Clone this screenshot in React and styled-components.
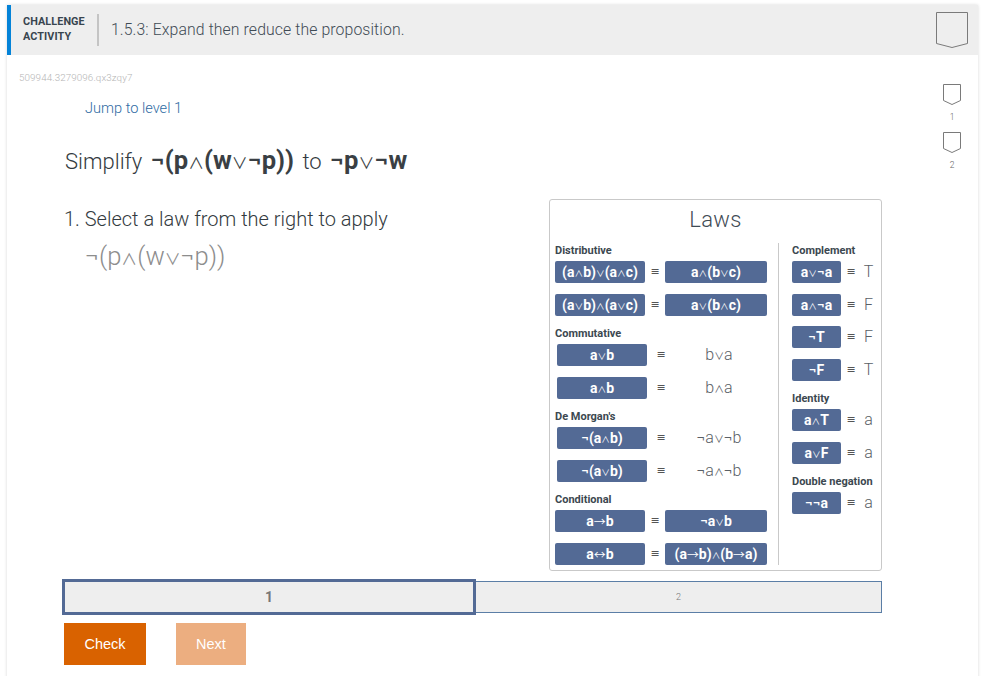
import React from "react";
import styled, { createGlobalStyle } from "styled-components";

const Global = createGlobalStyle`
  html, body { margin: 0; padding: 0; background: #fff; height: 100%; overflow: hidden; }
  body { font-family: Roboto, "Liberation Sans", "DejaVu Sans", sans-serif; color: #4a4f54; }
`;
const Card = styled.div`
  margin: 5px 7px 0 7px; width: 971px; height: 700px; background: #fff;
  box-shadow: 0 0 3px rgba(0,0,0,.16);
`;
const Header = styled.header`
  height: 50px; box-sizing: border-box; background: #eee; border-left: 4px solid #0483d8;
  display: flex; align-items: center; padding: 0 10px 0 12px;
`;
const Kind = styled.div`
  font: 700 10.8px/15px Roboto, sans-serif; color: #38454f; width: 63px; padding: 0 11px 3px 0;
  text-align: left;
`;
const KindLine = styled.span`display: block; letter-spacing: .1px;`;
const Title = styled.h1`
  flex: 1; margin: 0; font: 300 15.8px/32px Roboto, sans-serif; color: #3f4b55; letter-spacing: .1px;
  border-left: 2px solid #c4c4c4; padding-left: 12px;
`;
const ShieldSvg = styled.svg`display: block; fill: none; stroke: #7a7a7a; stroke-width: 1;`;
const Shield = ({ w, h }) => (
  <ShieldSvg width={w} height={h} viewBox={`0 0 ${w} ${h}`}>
    <path d={`M.5 .5H${w - .5}V${h - 4.5}L${w / 2} ${h - .5}L.5 ${h - 4.5}Z`} />
  </ShieldSvg>
);
const Body = styled.div`display: flex;`;
const Main = styled.main`flex: 1; padding-left: 12px; min-width: 0;`;
const Rail = styled.aside`
  width: 52px; padding-top: 29px; display: flex; flex-direction: column; align-items: center;
`;
const Level = styled.div`
  display: flex; flex-direction: column; align-items: center; height: 48px;
  font: 300 8.5px/12px Roboto, sans-serif; color: #666; gap: 6px;
`;
const Seed = styled.div`margin-top: 17px; font: 300 9.8px/12px Roboto, sans-serif; color: #b5b5b5; letter-spacing: .1px;`;
const Jump = styled.a`
  display: block; margin: 14px 0 0 66px; font: 300 14.6px/20px Roboto, sans-serif; color: #2f6ba3;
`;
const Content = styled.div`margin-left: 45px; width: 818px;`;
const Prompt = styled.h2`
  margin: 27px 0 0 1px; font: 300 22px/30px Roboto, sans-serif; color: #333a40; word-spacing: 3px;
  b { font-weight: 700; font-size: 25.6px; color: #3a3f44; }
`;
const Work = styled.div`margin-top: 22px; display: flex; justify-content: space-between;`;
const Left = styled.div`padding-top: 7px;`;
const Step = styled.div`font: 300 20px/26px Roboto, sans-serif; color: #333a40;`;
const Expr = styled.div`margin: 11px 0 0 21px; font: 300 25.6px/26px Roboto, sans-serif; color: #8d8d8d;`;
const Laws = styled.section`
  width: 333px; height: 372px; box-sizing: border-box; border: 1px solid #c9c9c9; border-radius: 3px;
  padding: 6px 5px 5px 5px;
`;
const LawsTitle = styled.div`
  text-align: center; font: 300 22px/28px Roboto, sans-serif; color: #3f4b55; letter-spacing: .3px;
  margin: 0 0 9px;
`;
const Columns = styled.div`display: flex; height: 322px;`;
const LeftCol = styled.div`width: 225px; border-right: 1px solid #c9c9c9; box-sizing: border-box;`;
const RightCol = styled.div`padding-left: 13px;`;
const Section = styled.div`margin-bottom: .5px;`;
const Label = styled.div`
  font: 700 11px/14px Roboto, sans-serif; color: #3c4850; padding-top: 1px; margin-bottom: 3px; white-space: nowrap;
`;
const Row = styled.div`
  display: grid; align-items: center; height: 22px; margin-bottom: 10.5px; white-space: nowrap;
  grid-template-columns: ${p => p.$cols};
  padding-left: ${p => p.$indent || 0}px;
`;
const Btn = styled.div`
  height: 22px; background: #536a95; color: #fff; border-radius: 2px; text-align: center;
  font: 700 14px/22px Roboto, sans-serif; white-space: nowrap;
`;
const Eq = styled.div`text-align: center; font: 400 11px/22px "DejaVu Sans", sans-serif; color: #555;`;
const Res = styled.div`
  text-align: center; font: 300 16px/22px Roboto, sans-serif; color: #5a6066;
`;
const Op = styled.span`font-family: "Noto Sans CJK JP", sans-serif; font-weight: 400; font-size: .62em; line-height: 1;`;
const Arrow = styled.span`font-family: "Noto Sans CJK JP", sans-serif; font-weight: 400; font-size: .85em; line-height: 1;`;
const Tabs = styled.div`margin-top: 8px; display: flex; align-items: center; margin-left: -2px; width: 820px;`;
const Tab = styled.div`
  box-sizing: border-box; text-align: center; background: #eee;
  ${p => p.$active ? `
    width: 414px; height: 36px; border: 3px solid #536a95;
    font: 700 14px/30px Roboto, sans-serif; color: #777;
  ` : `
    width: 406px; height: 32px; border: 1px solid #5b7ea6; border-left: 0;
    font: 300 9px/30px Roboto, sans-serif; color: #777;
  `}
`;
const Actions = styled.div`margin-top: 8px; display: flex; gap: 30px;`;
const Action = styled.button`
  height: 42px; width: ${p => p.$w}px; border: 0; padding: 0; color: #fff;
  background: ${p => p.$bg}; font: 400 14.5px "Liberation Sans", Arial, sans-serif;
`;

const Math_ = ({ t }) => (
  <>
    {t.split(/([∧∨→↔])/).map((s, i) =>
      /[∧∨]/.test(s) ? <Op key={i}>{s}</Op> : /[→↔]/.test(s) ? <Arrow key={i}>{s}</Arrow> : s
    )}
  </>
);
const wide = "90px 20px 102px";
const spread = "90px 28px 88px";
const right = "49px 20px 15px";
const L = ({ a, b, cols, indent, plain }) => (
  <Row $cols={cols} $indent={indent}>
    <Btn><Math_ t={a} /></Btn>
    <Eq>≡</Eq>
    {plain ? <Res><Math_ t={b} /></Res> : <Btn><Math_ t={b} /></Btn>}
  </Row>
);
const leftSections = [
  ["Distributive", wide, 0, false, [["(a∧b)∨(a∧c)", "a∧(b∨c)"], ["(a∨b)∧(a∨c)", "a∨(b∧c)"]]],
  ["Commutative", spread, 2, true, [["a∨b", "b∨a"], ["a∧b", "b∧a"]]],
  ["De Morgan's", spread, 2, true, [["¬(a∧b)", "¬a∨¬b"], ["¬(a∨b)", "¬a∧¬b"]]],
  ["Conditional", wide, 0, false, [["a→b", "¬a∨b"], ["a↔b", "(a→b)∧(b→a)"]]],
];
const rightSections = [
  ["Complement", [["a∨¬a", "T"], ["a∧¬a", "F"], ["¬T", "F"], ["¬F", "T"]]],
  ["Identity", [["a∧T", "a"], ["a∨F", "a"]]],
  ["Double negation", [["¬¬a", "a"]]],
];

export default function App() {
  return (
    <>
      <Global />
      <Card>
        <Header>
          <Kind><KindLine>CHALLENGE</KindLine><KindLine>ACTIVITY</KindLine></Kind>
          <Title>1.5.3: Expand then reduce the proposition.</Title>
          <Shield w={32} h={36} />
        </Header>
        <Body>
          <Main>
            <Seed>509944.3279096.qx3zqy7</Seed>
            <Jump>Jump to level 1</Jump>
            <Content>
              <Prompt>Simplify <b><Math_ t="¬(p∧(w∨¬p))" /></b> to <b><Math_ t="¬p∨¬w" /></b></Prompt>
              <Work>
                <Left>
                  <Step>1. Select a law from the right to apply</Step>
                  <Expr><Math_ t="¬(p∧(w∨¬p))" /></Expr>
                </Left>
                <Laws>
                  <LawsTitle>Laws</LawsTitle>
                  <Columns>
                    <LeftCol>
                      {leftSections.map(([name, cols, indent, plain, rows]) => (
                        <Section key={name}>
                          <Label>{name}</Label>
                          {rows.map(([a, b]) => (
                            <L key={a} a={a} b={b} cols={cols} indent={indent} plain={plain} />
                          ))}
                        </Section>
                      ))}
                    </LeftCol>
                    <RightCol>
                      {rightSections.map(([name, rows]) => (
                        <Section key={name}>
                          <Label>{name}</Label>
                          {rows.map(([a, b]) => (
                            <Row key={a} $cols={right}>
                              <Btn><Math_ t={a} /></Btn>
                              <Eq>≡</Eq>
                              <Res>{b}</Res>
                            </Row>
                          ))}
                        </Section>
                      ))}
                    </RightCol>
                  </Columns>
                </Laws>
              </Work>
              <Tabs>
                <Tab $active>1</Tab>
                <Tab>2</Tab>
              </Tabs>
              <Actions>
                <Action $w={82} $bg="#d96200">Check</Action>
                <Action $w={70} $bg="#ecae80">Next</Action>
              </Actions>
            </Content>
          </Main>
          <Rail>
            <Level><Shield w={18} h={21} />1</Level>
            <Level><Shield w={18} h={21} />2</Level>
          </Rail>
        </Body>
      </Card>
    </>
  );
}
